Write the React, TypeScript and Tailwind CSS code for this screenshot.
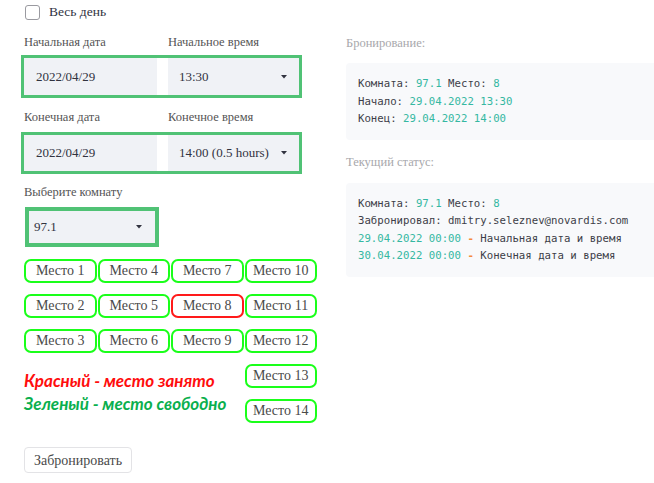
import React from 'react'

const serif = { fontFamily: '"Liberation Serif", "DejaVu Serif", serif' }
const mono = { fontFamily: '"DejaVu Sans Mono", "Liberation Mono", monospace' }

// небольшая стрелка у выпадающих списков
function Caret() {
  return (
    <svg width="6" height="4" viewBox="0 0 6 4" className="shrink-0">
      <polygon points="0,0 6,0 3,3.5" fill="#31333f" />
    </svg>
  )
}

const seats: { n: number; busy?: boolean }[] = [
  { n: 1 }, { n: 4 }, { n: 7 }, { n: 10 },
  { n: 2 }, { n: 5 }, { n: 8, busy: true }, { n: 11 },
  { n: 3 }, { n: 6 }, { n: 9 }, { n: 12 },
]

function Seat({ n, busy }: { n: number; busy?: boolean }) {
  return (
    <button
      className={`h-[24px] rounded-[7px] border-2 bg-white text-[14px] text-[#4a4a4a] leading-none ${
        busy ? 'border-[#ff1a1a]' : 'border-[#1aff1a]'
      }`}
      style={serif}
    >
      Место {n}
    </button>
  )
}

const teal = 'text-[#35b8a2]'

export default function App() {
  return (
    <div className="w-[654px] h-[483px] overflow-hidden bg-white flex pl-[24px]" style={serif}>
      {/* --------------- левая колонка: форма --------------- */}
      <div className="w-[293px] shrink-0 flex flex-col">
        <div className="h-[25px] flex items-center gap-[9px] pl-[1px]">
          <span className="w-[15px] h-[15px] rounded-[3px] border-[1.5px] border-[#9a9aa0] bg-white" />
          <span className="text-[13.5px] text-[#31333f]">Весь день</span>
        </div>

        <div className="mt-[9px] h-[16px] flex text-[12.5px] text-[#555] leading-[16px]">
          <div className="w-[144px]">Начальная дата</div>
          <div>Начальное время</div>
        </div>
        <div className="mt-[8px] h-[37px] w-[275px] flex outline-[3px] outline-solid outline-[#50c275]">
          <div className="w-[133px] bg-[#f0f2f6] flex items-center pl-[12px] text-[13px] text-[#31333f]">2022/04/29</div>
          <div className="w-[11px]" />
          <div className="flex-1 bg-[#f0f2f6] flex items-center justify-between pl-[11px] pr-[12px] text-[13px] text-[#31333f]">
            <span>13:30</span>
            <Caret />
          </div>
        </div>

        <div className="mt-[14px] h-[16px] flex text-[12.5px] text-[#555] leading-[16px]">
          <div className="w-[144px]">Конечная дата</div>
          <div>Конечное время</div>
        </div>
        <div className="mt-[10px] h-[36px] w-[275px] flex outline-[3px] outline-solid outline-[#50c275]">
          <div className="w-[133px] bg-[#f0f2f6] flex items-center pl-[12px] text-[13px] text-[#31333f]">2022/04/29</div>
          <div className="w-[11px]" />
          <div className="flex-1 bg-[#f0f2f6] flex items-center justify-between pl-[11px] pr-[12px] text-[13px] text-[#31333f]">
            <span>14:00 (0.5 hours)</span>
            <Caret />
          </div>
        </div>

        <div className="mt-[13px] h-[16px] text-[12.5px] text-[#555] leading-[16px]">Выберите комнату</div>
        <div className="mt-[11px] ml-[5px] h-[32px] w-[126px] bg-[#f0f2f6] flex items-center justify-between pl-[5px] pr-[13px] text-[13px] text-[#31333f] outline-4 outline-solid outline-[#50c275]">
          <span>97.1</span>
          <Caret />
        </div>

        <div className="mt-[16px] grid grid-cols-4 gap-x-[1px] gap-y-[11px]">
          {seats.map((s) => (
            <Seat key={s.n} n={s.n} busy={s.busy} />
          ))}
          <div
            className="col-span-3 row-span-2 flex flex-col justify-center text-[17px] font-bold italic leading-[23px] -mt-[4px]"
            style={{ fontFamily: 'Lato, "Open Sans", sans-serif' }}
          >
            <div className="text-[#ff0d0d]">Красный - место занято</div>
            <div className="text-[#0aaf4e]">Зеленый - место свободно</div>
          </div>
          <Seat n={13} />
          <Seat n={14} />
        </div>

        <button className="mt-[24px] h-[26px] w-[108px] rounded-[4px] border border-[#e3e3e6] bg-white text-[14px] text-[#4a4a4a]">
          Забронировать
        </button>
      </div>

      {/* --------------- правая колонка: статус --------------- */}
      <div className="ml-[29px] w-[340px] shrink-0 flex flex-col">
        <div className="mt-[35px] h-[16px] text-[12.5px] text-[#a8a8ac] leading-[16px]">Бронирование:</div>
        <div className="mt-[12px] rounded-[4px] bg-[#f8f9fb] px-[12px] py-[12px] text-[10.7px] text-[#3d3e48] leading-[17.5px]" style={mono}>
          <div>Комната: <span className={teal}>97.1</span> Место: <span className={teal}>8</span></div>
          <div>Начало: <span className={teal}>29.04.2022 13:30</span></div>
          <div>Конец: <span className={teal}>29.04.2022 14:00</span></div>
        </div>

        <div className="mt-[14px] h-[16px] text-[12.5px] text-[#a8a8ac] leading-[16px]">Текущий статус:</div>
        <div className="mt-[13px] rounded-[4px] bg-[#f8f9fb] px-[12px] py-[12px] text-[10.7px] text-[#3d3e48] leading-[17.5px]" style={mono}>
          <div>Комната: <span className={teal}>97.1</span> Место: <span className={teal}>8</span></div>
          <div>Забронировал: dmitry.seleznev@novardis.com</div>
          <div><span className={teal}>29.04.2022 00:00</span> <span className="text-[#f58a3c] font-bold">-</span> Начальная дата и время</div>
          <div><span className={teal}>30.04.2022 00:00</span> <span className="text-[#f58a3c] font-bold">-</span> Конечная дата и время</div>
        </div>
      </div>
    </div>
  )
}
